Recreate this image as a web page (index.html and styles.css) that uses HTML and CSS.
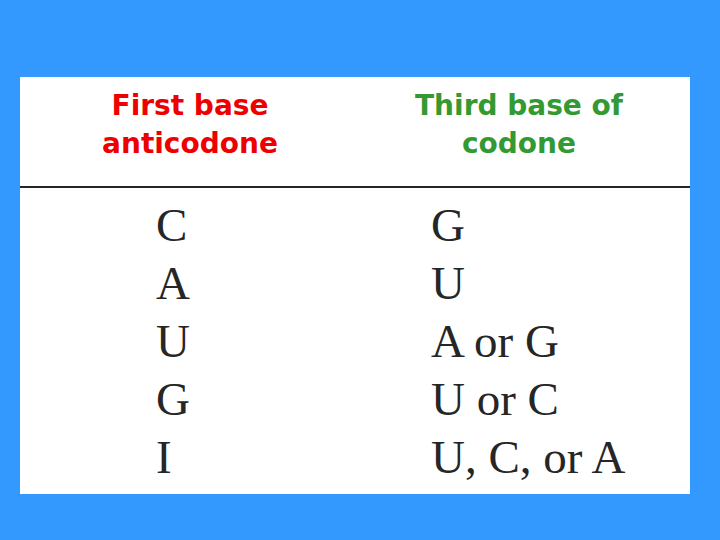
FILE: index.html
```html
<!DOCTYPE html>
<html>
<head>
<meta charset="utf-8">
<link rel="stylesheet" href="styles.css">
</head>
<body>
<div class="panel">
  <div class="head">
    <div class="hcell red">First base<br>anticodone</div>
    <div class="hcell green">Third base of<br>codone</div>
  </div>
  <div class="rule"></div>
  <div class="body">
    <div class="col">
      <div>C</div>
      <div>A</div>
      <div>U</div>
      <div>G</div>
      <div>I</div>
    </div>
    <div class="col">
      <div>G</div>
      <div>U</div>
      <div>A or G</div>
      <div>U or C</div>
      <div>U, C, or A</div>
    </div>
  </div>
</div>
</body>
</html>
```

FILE: styles.css
```css
html, body {
  margin: 0;
  padding: 0;
}
body {
  width: 720px;
  height: 540px;
  background: #3399ff;
  overflow: hidden;
  padding-top: 77px;
  box-sizing: border-box;
}
.panel {
  margin-left: 20px;
  width: 670px;
  height: 417px;
  background: #ffffff;
}
.head {
  display: grid;
  grid-template-columns: 340px 318px;
  padding-top: 10px;
  height: 109px;
  box-sizing: border-box;
}
.hcell {
  text-align: center;
  font-family: "DejaVu Sans", Verdana, sans-serif;
  font-weight: bold;
  font-size: 28px;
  line-height: 38px;
}
.red { color: #ee0000; }
.green { color: #339933; }
.rule {
  height: 2px;
  background: #262626;
}
.body {
  display: grid;
  grid-template-columns: 275px 1fr;
  padding-left: 136px;
  padding-top: 8px;
}
.col {
  font-family: "Liberation Serif", "Times New Roman", serif;
  font-size: 47px;
  line-height: 58px;
  color: #262626;
}
```
